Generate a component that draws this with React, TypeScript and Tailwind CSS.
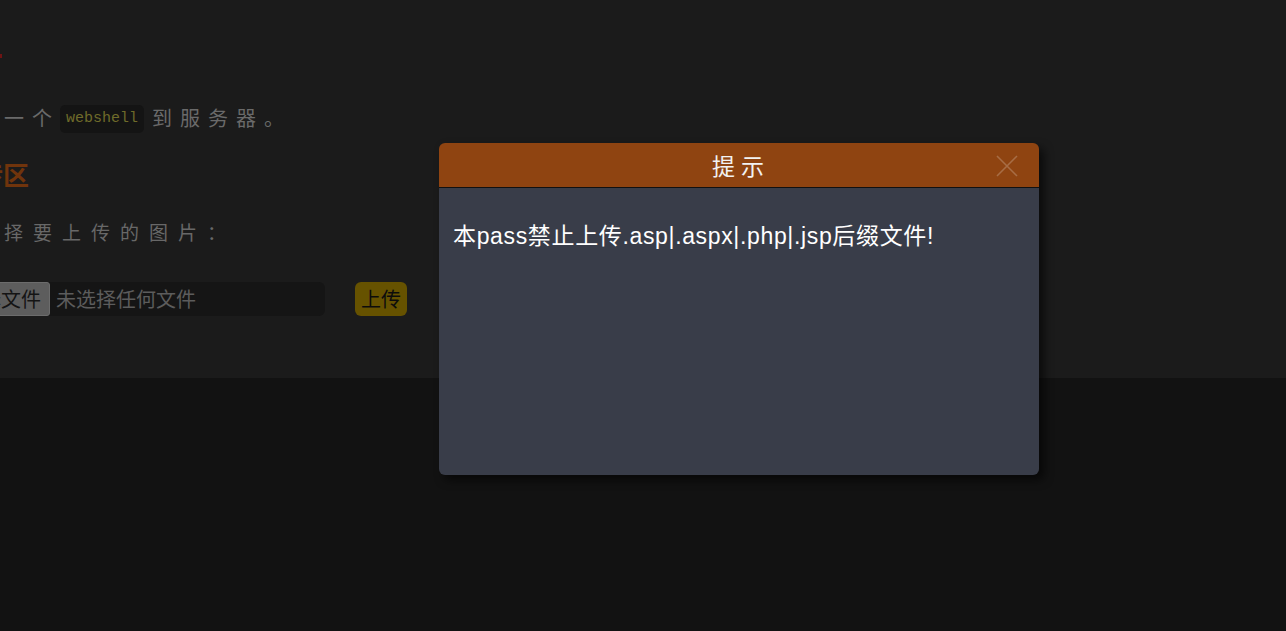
import React from 'react'

const cjk = '"Noto Sans CJK SC", "Noto Sans", sans-serif'
const uiFont = '"Liberation Sans", "Noto Sans CJK SC", sans-serif'

function CloseIcon() {
  return (
    <svg width="22" height="22" viewBox="0 0 22 22" fill="none">
      <path d="M1 1 L21 21 M21 1 L1 21" stroke="rgba(255,255,255,0.22)" strokeWidth="1.6" />
    </svg>
  )
}

function UploadPage() {
  return (
    <div className="h-[378px] bg-[#1b1b1b] overflow-hidden" style={{ fontFamily: cjk }}>
      <div className="pt-[54px]">
        <div className="w-[2px] h-[4px] bg-[#6e1414]" />

        <p className="mt-[44px] pl-[4px] text-[20px] leading-[32px] tracking-[8px] text-[#6a6a6a] whitespace-nowrap">
          一个
          <code
            className="inline-block align-middle rounded-[5px] bg-[#141414] px-[6px] text-[15px] leading-[28px] tracking-normal text-[#6f6b2a] -translate-y-[2px]"
            style={{ fontFamily: '"Liberation Mono", monospace' }}
          >
            webshell
          </code>
          <span className="ml-[8px]">到服务器。</span>
        </p>

        <h2 className="mt-[21px] -ml-[23px] text-[26px] leading-[36px] font-bold text-[#70340c] whitespace-nowrap">
          传区
        </h2>

        <p className="mt-[25px] pl-[4px] text-[19px] leading-[30px] tracking-[10px] text-[#686868] whitespace-nowrap">
          择要上传的图片：
        </p>

        <div className="mt-[35px] flex items-center">
          <div className="-ml-[48px] w-[373px] h-[34px] flex items-center rounded-md bg-[#151515]">
            <button className="h-[34px] px-[8px] rounded-[3px] border border-[#6c6c6c] bg-[#5d5d5d] text-[20px] leading-[30px] text-[#141414]">
              选择文件
            </button>
            <span className="ml-[6px] text-[20px] text-[#5c5c5c]">未选择任何文件</span>
          </div>
          <button className="ml-[30px] h-[34px] px-[6px] rounded-md bg-[#665200] text-[20px] leading-[34px] text-[#0c0c0c]">
            上传
          </button>
        </div>
      </div>
    </div>
  )
}

function Dialog() {
  return (
    <div className="absolute left-[439px] top-[143px] w-[600px] rounded-md shadow-[5px_5px_10px_rgba(0,0,0,0.6)]">
      <div className="relative h-[45px] rounded-t-md border-b border-[#111111] bg-[#8f4411] flex items-center justify-center">
        <span
          className="text-[23px] tracking-[6px] pl-[4px] text-[#f2f2f2]"
          style={{ fontFamily: cjk }}
        >
          提示
        </span>
        <div className="absolute right-[21px] top-[12px]">
          <CloseIcon />
        </div>
      </div>
      <div className="h-[287px] rounded-b-md bg-[#393d49] px-[14px] pt-[33px]">
        <p className="text-[23px] leading-[30px] tracking-[0.65px] text-white" style={{ fontFamily: uiFont }}>
          本pass禁止上传.asp|.aspx|.php|.jsp后缀文件!
        </p>
      </div>
    </div>
  )
}

export default function App() {
  return (
    <div className="relative w-full min-h-[631px] bg-[#121212] overflow-hidden">
      <UploadPage />
      <Dialog />
    </div>
  )
}
